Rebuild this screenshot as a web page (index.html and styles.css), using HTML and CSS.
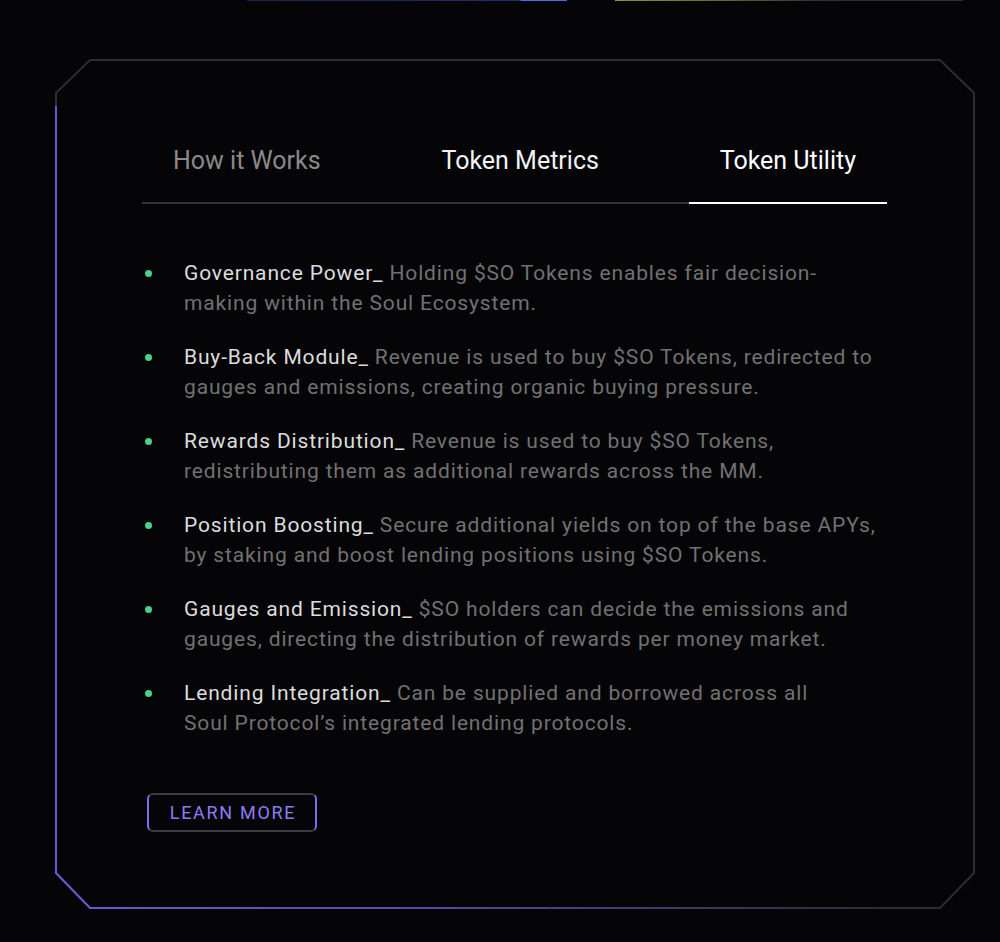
FILE: index.html
```html
<!DOCTYPE html>
<html lang="en">
<head>
<meta charset="utf-8">
<title>Token Utility</title>
<link rel="stylesheet" href="styles.css">
</head>
<body>
<div class="top-lines">
  <span class="line line-blue"></span>
  <span class="line line-green"></span>
</div>
<section class="card">
  <svg class="frame" width="920" height="850" viewBox="0 0 920 850" aria-hidden="true">
    <defs>
      <linearGradient id="fade" x1="0" y1="0" x2="920" y2="0" gradientUnits="userSpaceOnUse">
        <stop offset="0" stop-color="#6a58d0"/>
        <stop offset="0.35" stop-color="#5a4cae"/>
        <stop offset="0.9" stop-color="#2a2c36"/>
      </linearGradient>
    </defs>
    <polygon points="35,1 885,1 919,34 919,814 885,849 35,849 1,814 1,34" fill="none" stroke="#2a2c36" stroke-width="2"/>
    <polyline points="1,47 1,814 35,849 885,849" fill="none" stroke="url(#fade)" stroke-width="2"/>
  </svg>
  <nav class="tabs">
    <button class="tab">How it Works</button>
    <button class="tab tab-light">Token Metrics</button>
    <button class="tab tab-active">Token Utility</button>
  </nav>
  <ul class="features">
    <li><span class="title">Governance Power_</span> Holding $SO Tokens enables fair decision-making within the Soul Ecosystem.</li>
    <li><span class="title">Buy-Back Module_</span> Revenue is used to buy $SO Tokens, redirected to gauges and emissions, creating organic buying pressure.</li>
    <li><span class="title">Rewards Distribution_</span> Revenue is used to buy $SO Tokens, redistributing them as additional rewards across the MM.</li>
    <li><span class="title">Position Boosting_</span> Secure additional yields on top of the base APYs, by staking and boost lending positions using $SO Tokens.</li>
    <li><span class="title">Gauges and Emission_</span> $SO holders can decide the emissions and gauges, directing the distribution of rewards per money market.</li>
    <li><span class="title">Lending Integration_</span> Can be supplied and borrowed across all<br>Soul Protocol’s integrated lending protocols.</li>
  </ul>
  <button class="learn">LEARN MORE</button>
</section>
</body>
</html>
```
FILE: styles.css
```css
html, body {
  margin: 0;
  padding: 0;
  background: #050507;
}
body {
  font-family: Roboto, "Liberation Sans", sans-serif;
  width: 1000px;
  height: 942px;
  overflow: hidden;
}
.top-lines {
  display: flex;
  gap: 48px;
  padding-left: 247px;
  height: 2px;
}
.line {
  display: block;
  height: 1px;
}
.line-blue {
  width: 320px;
  background: linear-gradient(90deg, #1b2150 0%, #222a6a 85%, #4a6cf0 86%, #4a6cf0 100%);
}
.line-green {
  width: 348px;
  background: linear-gradient(90deg, #7d9a3c 0%, #5a7030 30%, #2a2f33 60%, #2a2c36 100%);
}
.card {
  position: relative;
  box-sizing: border-box;
  width: 920px;
  height: 850px;
  margin: 57px 0 0 55px;
  padding: 86px 88px 0 87px;
}
.frame {
  position: absolute;
  left: 0;
  top: 0;
  pointer-events: none;
}
.tabs {
  display: flex;
  justify-content: space-between;
  border-bottom: 2px solid #333438;
}
.tab {
  background: none;
  border: none;
  font-family: inherit;
  font-size: 25px;
  line-height: 32px;
  color: #8a8a8a;
  padding: 0 31px 25px;
  margin-bottom: -2px;
  border-bottom: 2px solid transparent;
  letter-spacing: 0;
}
.tab-light {
  color: #f2f2f2;
}
.tab-active {
  color: #ffffff;
  border-bottom-color: #ffffff;
}
.features {
  list-style: none;
  margin: 54px 0 0;
  padding: 0;
  display: flex;
  flex-direction: column;
  gap: 24px;
}
.features li {
  position: relative;
  padding-left: 42px;
  padding-right: 9px;
  font-size: 21px;
  line-height: 30px;
  letter-spacing: 0.85px;
  color: #717171;
}
.features li::before {
  content: "";
  position: absolute;
  left: 3px;
  top: 12px;
  width: 7px;
  height: 7px;
  border-radius: 50%;
  background: #46d18c;
}
.title {
  color: #dcdcdc;
}
.learn {
  margin: 55px 0 0 5px;
  width: 170px;
  height: 39px;
  background: transparent;
  border: 2px solid;
  border-color: #3c3c40 #7b6cf0;
  border-radius: 6px;
  color: #8b7cf6;
  font-family: inherit;
  font-size: 18px;
  letter-spacing: 1.7px;
  padding: 0 0 0 2px;
}
```
